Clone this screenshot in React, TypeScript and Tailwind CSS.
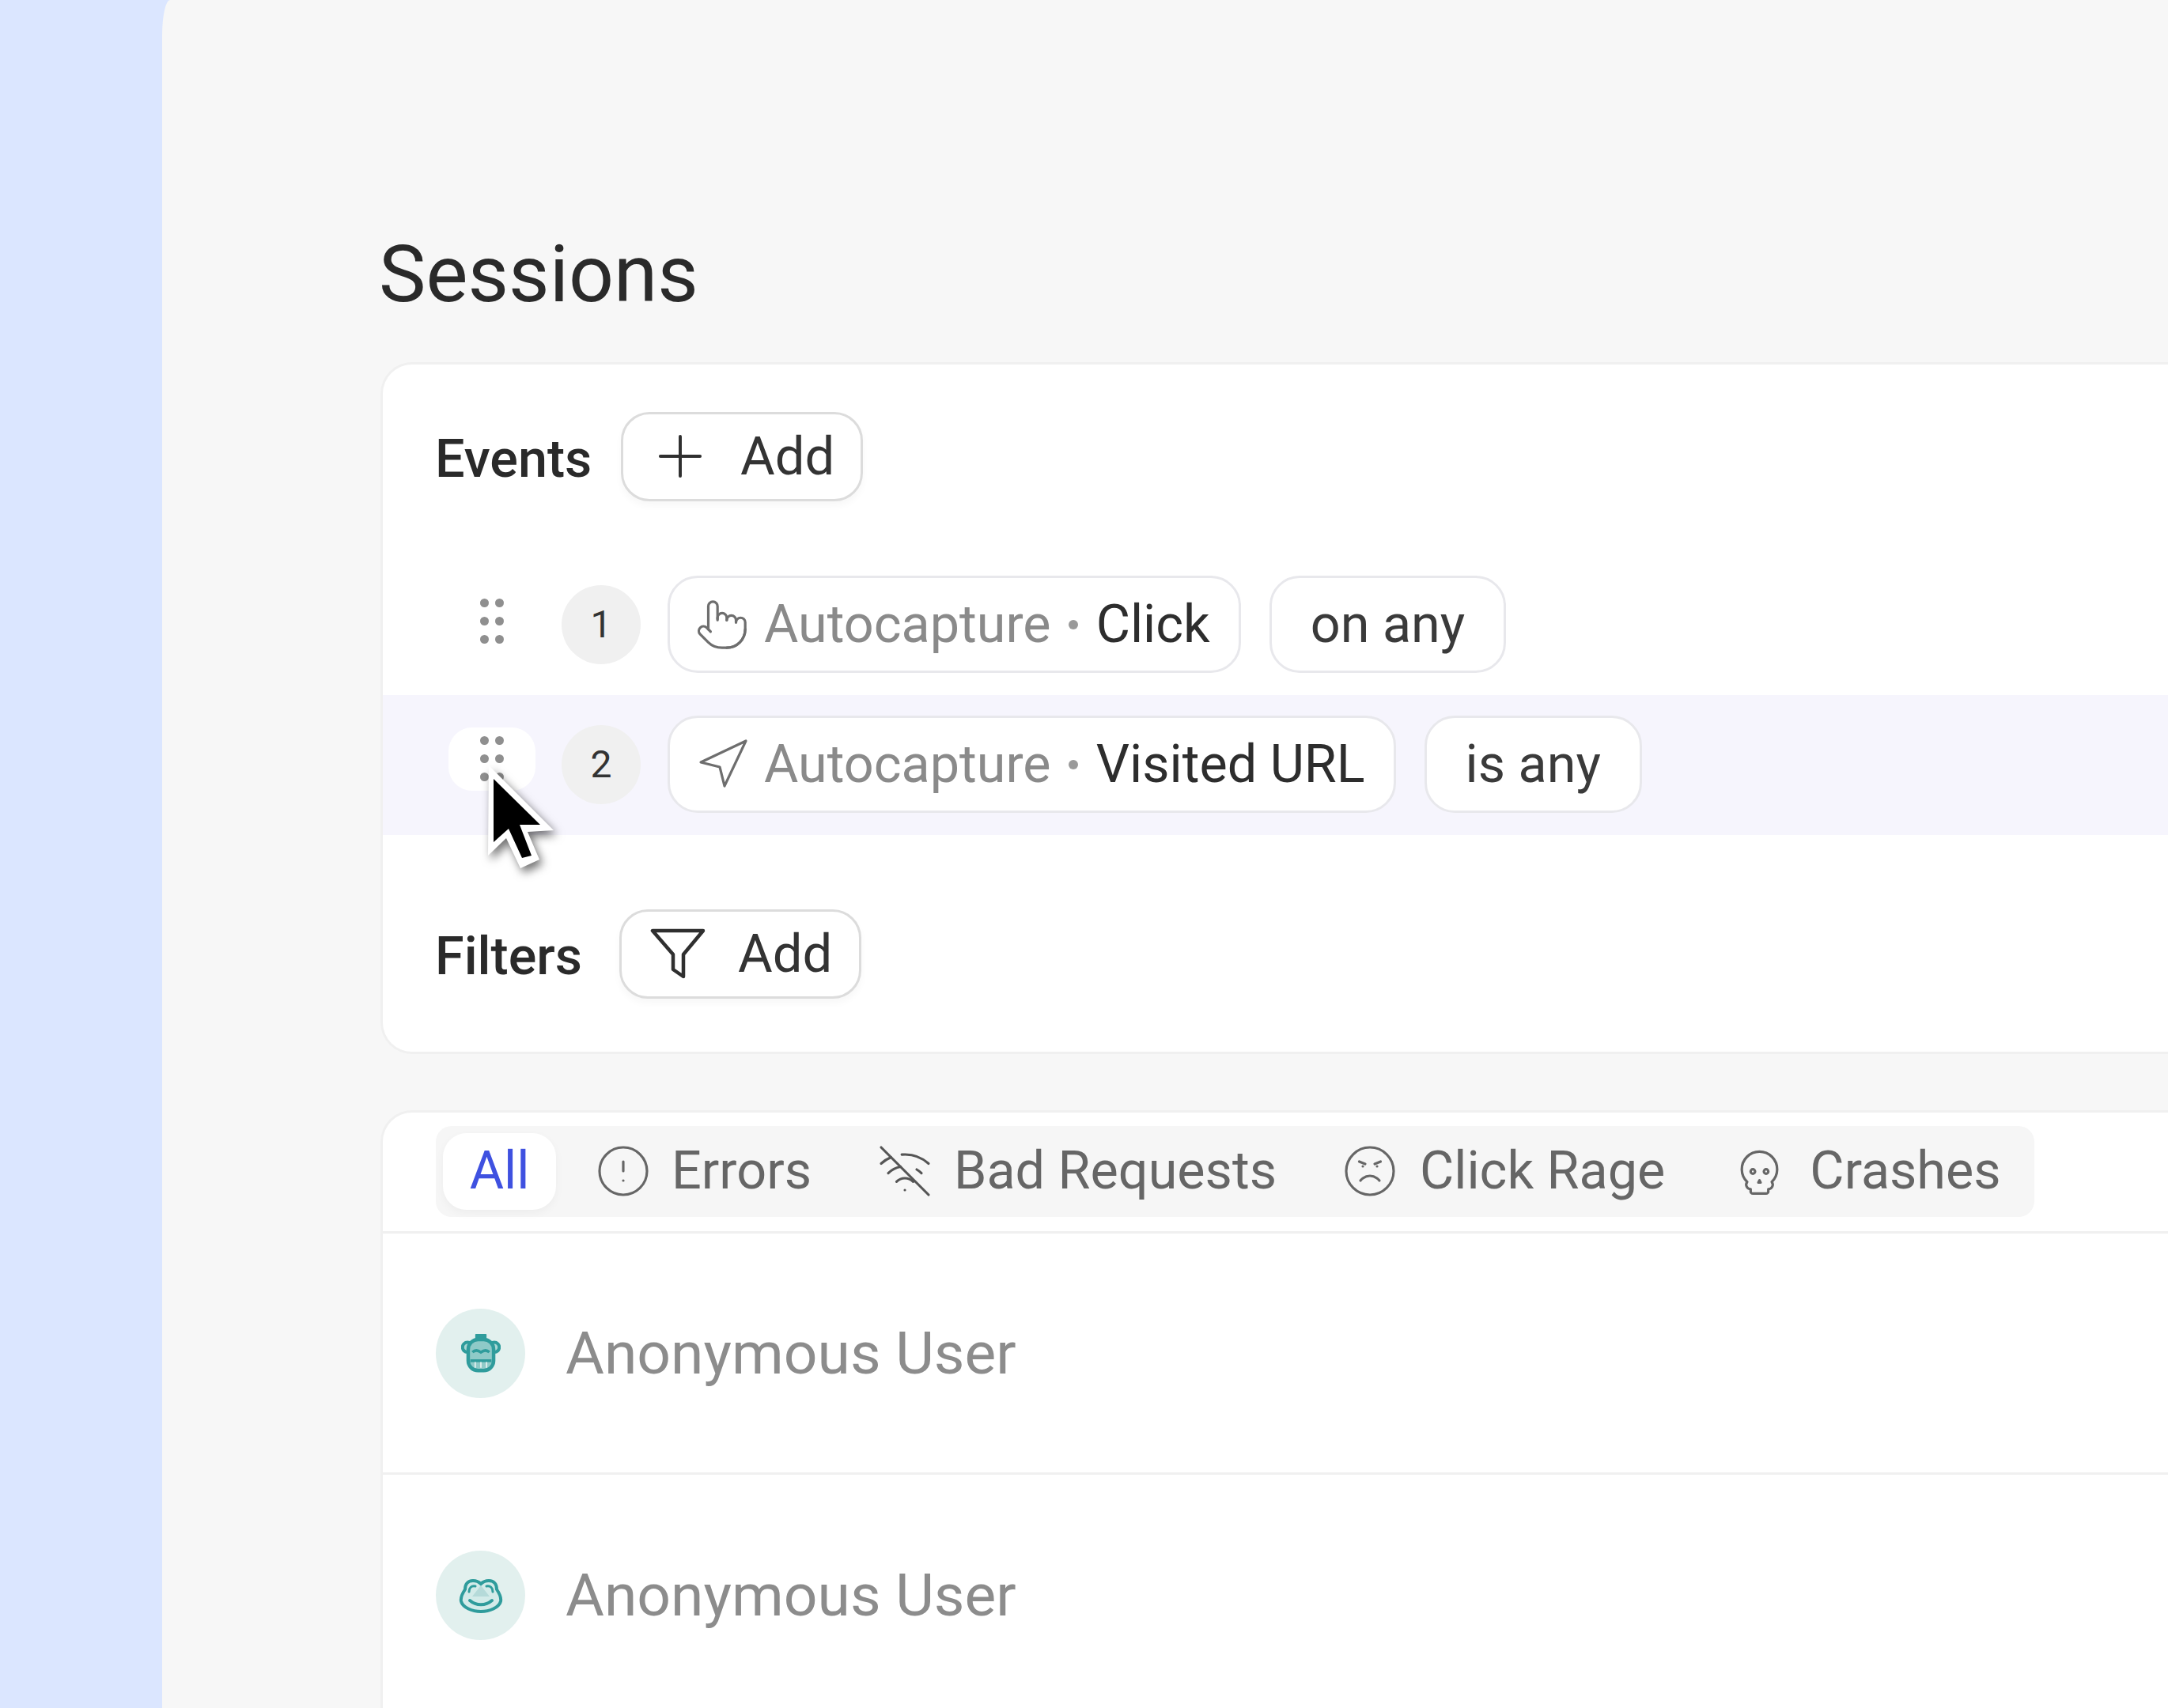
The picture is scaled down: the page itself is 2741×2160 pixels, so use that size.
import React from "react";
import { Plus, Pointer, Navigation, CircleAlert, WifiOff, Angry, Skull } from "lucide-react";

function Funnel() {
  return (
    <svg width="70" height="64" viewBox="0 0 70 64" fill="none" stroke="#2f2f2f" strokeWidth="4.5" strokeLinejoin="round">
      <path d="M3 3H67L42 33V61L29 52V33Z" />
    </svg>
  );
}

function Dots() {
  return (
    <div className="grid grid-cols-2 gap-x-[8px] gap-y-[12px]">
      {[0, 1, 2, 3, 4, 5].map((i) => (
        <span key={i} className="block w-[11px] h-[11px] rounded-full bg-[#8f8f8f]" />
      ))}
    </div>
  );
}

function AddButton({ icon, cls }: { icon: React.ReactNode; cls: string }) {
  return (
    <button className={`flex items-center h-[113px] w-[306px] border-[3px] border-[#dcdcdc] rounded-[36px] bg-white shadow-[0_6px_10px_rgba(0,0,0,0.03)] text-[67px] text-[#333] ${cls}`}>
      {icon}
      <span>Add</span>
    </button>
  );
}

function Chip({ icon, name }: { icon: React.ReactNode; name: string }) {
  return (
    <div className="flex items-center h-[123px] pl-[27px] pr-[36px] border-[3px] border-[#e8e8ec] rounded-[38px] bg-white text-[66.5px] text-[#8a8a8a]">
      <span className="w-[78px] flex justify-center shrink-0">{icon}</span>
      <span className="ml-[14px]">Autocapture</span>
      <span className="mx-[22.5px] w-[12px] h-[12px] rounded-full bg-[#9a9a9a]" />
      <span className="text-[#2d2d2d]">{name}</span>
    </div>
  );
}

function Op({ text }: { text: string }) {
  return (
    <div className="flex items-center h-[123px] px-[49px] border-[3px] border-[#e8e8ec] rounded-[38px] bg-white text-[66.5px] text-[#3a3a3a]">
      {text}
    </div>
  );
}

function Row({ n, hot, icon, name, op }: { n: number; hot?: boolean; icon: React.ReactNode; name: string; op: string }) {
  return (
    <div className={`flex items-center h-[177px] pl-[83px] ${hot ? "bg-[#f6f5fd]" : ""}`}>
      <div className={`relative flex justify-center items-center w-[110px] h-[80px] rounded-[30px] ${hot ? "bg-white -mt-[16px]" : "-mt-[10px]"}`}>
        <Dots />
      </div>
      <div className="ml-[33px] -mt-[2px] flex items-center justify-center w-[100px] h-[100px] rounded-full bg-[#f0f0f0] text-[48px] text-[#333]">{n}</div>
      <div className="ml-[34px] -mt-[2px] flex items-center gap-[36px]">
        <Chip icon={icon} name={name} />
        <Op text={op} />
      </div>
    </div>
  );
}

function Tab({ icon, label, ml, gap }: { icon: React.ReactNode; label: string; ml: string; gap: string }) {
  return (
    <div className={`flex items-center text-[66.5px] text-[#666] ${ml} ${gap}`}>
      {icon}
      <span>{label}</span>
    </div>
  );
}

function Bear() {
  return (
    <svg width="50" height="50" viewBox="0 0 56 56" fill="none">
      <rect x="20" y="1" width="16" height="10" rx="1" fill="#2f9c9c" />
      <circle cx="9" cy="20" r="7" fill="#a9d6d3" stroke="#2f9c9c" strokeWidth="4.5" />
      <circle cx="47" cy="20" r="7" fill="#a9d6d3" stroke="#2f9c9c" strokeWidth="4.5" />
      <rect x="10" y="9" width="36" height="44" rx="14" fill="#8fcac8" stroke="#2f9c9c" strokeWidth="5" />
      <path d="M16 27c4-4 8-3 12 0 4-3 8-4 12 0" stroke="#2f9c9c" strokeWidth="4" />
      <path d="M13 39h30" stroke="#2f9c9c" strokeWidth="4" />
      <path d="M20 41v8M28 41v8M36 41v8" stroke="#e2f0ee" strokeWidth="2" />
    </svg>
  );
}

function Frog() {
  return (
    <svg width="56" height="44" viewBox="0 0 56 44" fill="none">
      <path d="M18 3c5 0 8 2 10 4 2-2 5-4 10-4 7 0 10 5 10 11 4 6 6 10 5 15-2 8-14 13-25 13S5 37 3 29c-1-5 1-9 5-15C8 8 11 3 18 3Z" fill="#d3ebe9" stroke="#2f9c9c" strokeWidth="4" />
      <path d="M28 9l11 14H17Z" fill="#b5dad9" />
      <path d="M14 28c8 7 20 7 28 0" stroke="#2f9c9c" strokeWidth="4" strokeLinecap="round" />
      <path d="M13 17c0-5 3-8 8-7M43 17c0-5-3-8-8-7" stroke="#2f9c9c" strokeWidth="3" strokeLinecap="round" />
    </svg>
  );
}

function Person({ avatar, line }: { avatar: React.ReactNode; line?: boolean }) {
  return (
    <div className={`flex items-center h-[305px] pl-[67px] ${line ? "border-b-[3px] border-[#f0f0f0]" : ""}`}>
      <div className="flex items-center justify-center w-[113px] h-[113px] rounded-full bg-[#e2f0ee]">{avatar}</div>
      <span className="ml-[51px] text-[75px] text-[#8c8c8c]">Anonymous User</span>
    </div>
  );
}

function Cursor() {
  return (
    <svg className="absolute left-[618px] top-[968px] overflow-visible drop-shadow-[4px_6px_6px_rgba(0,0,0,0.55)]" width="84" height="132" viewBox="0 0 84 132">
      <path d="M0 0L-1 114L22 92L40 130L64 119L49 84L82 82Z" fill="#fff" />
      <path d="M6 17V97L25 80L42 117L54 114L39 75L65 75Z" fill="#000" />
    </svg>
  );
}

export default function App() {
  return (
    <div className="relative flex h-[2160px] overflow-hidden bg-[#dbe6ff]" style={{ fontFamily: '"Roboto", sans-serif' }}>
      <div className="w-[205px] shrink-0" />
      <main className="flex-1 min-w-0 bg-[#f7f7f7] rounded-tl-[10px_45px] pl-[276px] pt-[287px]">
        <h1 className="-ml-[2px] text-[100px] leading-[120px] text-[#2a2a2a] mb-[51px]">Sessions</h1>

        <section className="h-[875px] bg-white rounded-l-[40px] border-[3px] border-r-0 border-[#f0f0f0]">
          <div className="flex items-center h-[241px] pl-[66px] pb-[9px]">
            <span className="w-[235px] text-[66.5px] font-medium text-[#2a2a2a] pt-[8px]">Events</span>
            <AddButton cls="pl-[29px] gap-[33px]" icon={<Plus size={86} strokeWidth={1.1} color="#2f2f2f" />} />
          </div>
          <Row n={1} icon={<Pointer size={70} strokeWidth={1.1} color="#6e6e6e" />} name="Click" op="on any" />
          <Row n={2} hot icon={<Navigation size={72} strokeWidth={1.05} color="#6e6e6e" />} name="Visited URL" op="is any" />
          <div className="flex items-center h-[274px] pt-[26px] pl-[66px]">
            <span className="w-[233px] text-[66.5px] font-medium text-[#2a2a2a] pt-[8px]">Filters</span>
            <AddButton cls="pl-[36px] gap-[41px]" icon={<Funnel />} />
          </div>
        </section>

        <section className="mt-[71px] bg-white rounded-tl-[40px] border-[3px] border-r-0 border-b-0 border-[#f0f0f0]">
          <div className="flex items-center h-[153px] pb-[2px] pl-[67px] border-b-[3px] border-[#f0f0f0]">
            <div className="flex items-center h-[115px] w-[2021px] pl-[9px] rounded-[20px] bg-[#f6f6f6]">
              <div className="flex items-center justify-center w-[143px] h-[97px] rounded-[30px] bg-white shadow-[0_4px_12px_rgba(0,0,0,0.04)] text-[66.5px] text-[#3f51e0]">All</div>
              <Tab ml="ml-[49px]" gap="gap-[25px]" icon={<CircleAlert size={72} strokeWidth={1.05} color="#666" />} label="Errors" />
              <Tab ml="ml-[82px]" gap="gap-[26px]" icon={<WifiOff size={72} strokeWidth={1.05} color="#555" />} label="Bad Requests" />
              <Tab ml="ml-[82px]" gap="gap-[27px]" icon={<Angry size={72} strokeWidth={1.05} color="#666" />} label="Click Rage" />
              <Tab ml="ml-[86px]" gap="gap-[30px]" icon={<Skull size={67} strokeWidth={1.15} color="#666" />} label="Crashes" />
            </div>
          </div>
          <Person line avatar={<Bear />} />
          <Person avatar={<Frog />} />
        </section>
      </main>
      <Cursor />
    </div>
  );
}
